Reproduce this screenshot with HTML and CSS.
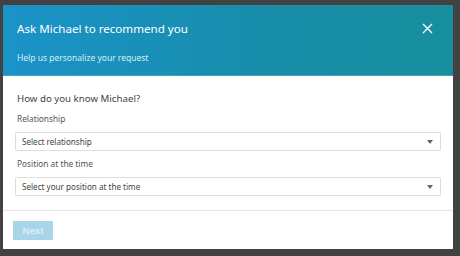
FILE: index.html
```html
<!DOCTYPE html>
<html>
<head>
<meta charset="utf-8">
<title>Ask for a recommendation</title>
<link rel="stylesheet" href="styles.css">
</head>
<body>
<div class="modal">
	<div class="modal-head">
		<div class="title-row">
			<h2 class="title">Ask Michael to recommend you</h2>
			<button class="close" aria-label="Close">
				<svg width="11" height="11" viewBox="0 0 11 11"><path d="M1 1L10 10M10 1L1 10" stroke="#fff" stroke-width="1.4" fill="none"/></svg>
			</button>
		</div>
		<div class="subtitle">Help us personalize your request</div>
	</div>
	<div class="modal-body">
		<div class="question">How do you know Michael?</div>
		<div class="label">Relationship</div>
		<div class="select">Select relationship<span class="caret"></span></div>
		<div class="label">Position at the time</div>
		<div class="select">Select your position at the time<span class="caret"></span></div>
	</div>
	<div class="modal-foot">
		<button class="next" disabled>Next</button>
	</div>
</div>
</body>
</html>
```
FILE: styles.css
```css
body {
	margin: 0;
	padding-top: 5px;
	background: #424242;
	font-family: "Noto Sans", "Open Sans", sans-serif;
}

.modal {
	width: 450px;
	margin-left: 3px;
	background: #fff;
}

.modal-head {
	height: 70px;
	padding: 0 14px;
	background: linear-gradient(90deg, #1b93c9 0%, #178da9 60%, #188f9e 100%);
	border-bottom: 1px solid #3aa6b8;
	color: #fff;
}

.title-row {
	display: flex;
	justify-content: space-between;
	align-items: center;
	height: 46px;
}

.title {
	margin: 0;
	font-size: 11.6px;
	font-weight: normal;
}

.close {
	background: none;
	border: 0;
	padding: 0;
	margin-right: 6px;
	width: 11px;
	height: 11px;
	display: flex;
}

.subtitle {
	font-size: 8.5px;
	color: #d6eef5;
	line-height: 14px;
}

.modal-body {
	padding: 16px 12px 14px 12px;
	border-bottom: 1px solid #e6e6e6;
}

.question {
	font-size: 9.7px;
	color: #444;
	padding-left: 2px;
	line-height: 14px;
}

.label {
	font-size: 8.3px;
	color: #555;
	padding-left: 2px;
	line-height: 12px;
	margin: 7px 0;
}

.select {
	height: 17px;
	border: 1px solid #dedede;
	border-radius: 1px;
	font-size: 8.1px;
	color: #444;
	padding-left: 6px;
	display: flex;
	align-items: center;
	justify-content: space-between;
}

.caret {
	width: 0;
	height: 0;
	border-left: 3.5px solid transparent;
	border-right: 3.5px solid transparent;
	border-top: 4px solid #666;
	margin-right: 7px;
}

.modal-foot {
	padding: 10px 10px 9px 10px;
}

.next {
	display: block;
	width: 40px;
	height: 19px;
	background: #a8d5ec;
	border: 0;
	border-radius: 1px;
	color: #d9edf7;
	font-family: "Noto Sans", "Open Sans", sans-serif;
	font-size: 9px;
	font-weight: bold;
	padding: 0;
}
```
